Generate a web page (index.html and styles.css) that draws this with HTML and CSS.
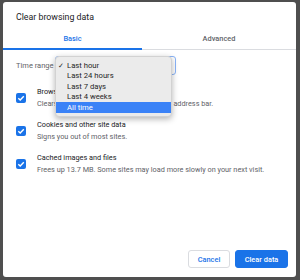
FILE: index.html
```html
<!DOCTYPE html>
<html lang="en">
<head>
    <meta charset="UTF-8">
    <title>Clear browsing data</title>
    <link rel="stylesheet" href="styles.css">
</head>
<body>

    <div class="dialog">
        <h1 class="title">Clear browsing data</h1>

        <div class="tabs">
            <div class="tab active">Basic</div>
            <div class="tab">Advanced</div>
        </div>

        <div class="content">
            <div class="range-row">
                <span class="range-label">Time range</span>
                <div class="select">
                    <ul class="menu">
                        <li class="menu-item checked">Last hour</li>
                        <li class="menu-item">Last 24 hours</li>
                        <li class="menu-item">Last 7 days</li>
                        <li class="menu-item">Last 4 weeks</li>
                        <li class="menu-item selected">All time</li>
                    </ul>
                </div>
            </div>

            <div class="option">
                <span class="checkbox">
                    <svg viewBox="0 0 10 10"><path d="M2.3 5.2 L4.2 7 L7.8 3.2" /></svg>
                </span>
                <div class="option-text">
                    <div class="option-title">Browsing history</div>
                    <div class="option-desc">Clears history and autocompletions in the address bar.</div>
                </div>
            </div>

            <div class="option">
                <span class="checkbox">
                    <svg viewBox="0 0 10 10"><path d="M2.3 5.2 L4.2 7 L7.8 3.2" /></svg>
                </span>
                <div class="option-text">
                    <div class="option-title">Cookies and other site data</div>
                    <div class="option-desc">Signs you out of most sites.</div>
                </div>
            </div>

            <div class="option">
                <span class="checkbox">
                    <svg viewBox="0 0 10 10"><path d="M2.3 5.2 L4.2 7 L7.8 3.2" /></svg>
                </span>
                <div class="option-text">
                    <div class="option-title">Cached images and files</div>
                    <div class="option-desc">Frees up 13.7 MB. Some sites may load more slowly on your next visit.</div>
                </div>
            </div>
        </div>

        <div class="footer">
            <button class="btn btn-cancel">Cancel</button>
            <button class="btn btn-primary">Clear data</button>
        </div>
    </div>

</body>
</html>
```

FILE: styles.css
```css
/* --- base --- */
body {
    margin: 0;
    padding: 2px 4px 3px 3px;
    background-color: #4f4f4f;
    font-family: Roboto, "Noto Sans", sans-serif;
    color: #202124;
}

/* --- dialog --- */
.dialog {
    height: 275px;
    background: #fff;
    border-radius: 3px;
    display: flex;
    flex-direction: column;
}

.title {
    margin: 0;
    padding: 9px 0 0 13px;
    height: 15px;
    font-size: 8.8px;
    line-height: 12px;
    font-weight: 400;
    color: #202124;
}

/* --- tabs --- */
.tabs {
    display: grid;
    grid-template-columns: 139px 1fr;
    height: 23px;
    border-bottom: 1px solid #dadce0;
}

.tab {
    position: relative;
    display: flex;
    align-items: center;
    justify-content: center;
    padding-top: 1px;
    font-size: 7.4px;
    font-weight: 500;
    color: #5f6368;
}

.tab.active {
    color: #1a73e8;
}

.tab.active::after {
    content: "";
    position: absolute;
    left: 0;
    right: 0;
    bottom: -1px;
    height: 2px;
    background: #1a73e8;
}

/* --- content --- */
.content {
    padding: 6px 0 0 13px;
}

.range-row {
    display: flex;
    align-items: center;
    height: 19px;
    font-size: 7.5px;
    color: #5f6368;
}

.range-label {
    width: 39px;
}

.select {
    position: relative;
    width: 119px;
    height: 17px;
    border: 1px solid #8ab4f8;
    border-radius: 3px;
}

.menu {
    position: absolute;
    top: -1px;
    left: -1px;
    width: 115px;
    margin: 0;
    padding: 4px 0 3px;
    list-style: none;
    background: #ebebeb;
    border: 1px solid #d2d2d2;
    border-radius: 4px;
    box-shadow: 0 2px 6px rgba(0, 0, 0, 0.3);
    z-index: 5;
}

.menu-item {
    height: 10.3px;
    line-height: 10.3px;
    padding-left: 11px;
    font-size: 7.7px;
    color: #262626;
    position: relative;
}

.menu-item.checked::before {
    content: "\2713";
    position: absolute;
    left: 2px;
    font-size: 7px;
}

.menu-item.selected {
    height: 11px;
    line-height: 11px;
    background: #3a82f7;
    color: #fff;
}

/* --- options --- */
.option {
    display: flex;
    align-items: center;
    gap: 11px;
    margin-top: 9px;
}

.range-row + .option {
    margin-top: 11px;
}

.checkbox {
    width: 10px;
    height: 10px;
    border-radius: 2px;
    background: #1a73e8;
    flex: none;
}

.checkbox svg {
    display: block;
    width: 10px;
    height: 10px;
    fill: none;
    stroke: #fff;
    stroke-width: 1.4;
}

.option-title {
    font-size: 7.3px;
    line-height: 12px;
    color: #202124;
}

.option-desc {
    font-size: 7.3px;
    line-height: 12px;
    color: #5f6368;
}

/* --- footer --- */
.footer {
    margin-top: auto;
    display: flex;
    justify-content: flex-end;
    gap: 5px;
    padding: 0 8px 9px 0;
}

.btn {
    height: 18px;
    padding: 0;
    border-radius: 3px;
    font-family: Roboto, "Noto Sans", sans-serif;
    font-size: 7.4px;
    font-weight: 500;
}

.btn-cancel {
    width: 42px;
    background: #fff;
    border: 1px solid #dadce0;
    color: #1a73e8;
}

.btn-primary {
    width: 53px;
    background: #1a73e8;
    border: 1px solid #1a73e8;
    color: #fff;
}
```
